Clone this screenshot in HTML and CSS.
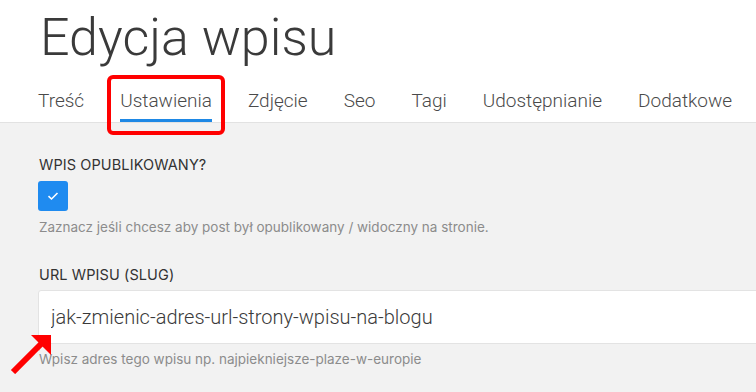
FILE: index.html
```html
<!DOCTYPE html>
<html lang="pl">
<head>
  <meta charset="UTF-8" />
  <title>Edycja wpisu</title>
  <link rel="stylesheet" href="styles.css">
</head>
<body>
  <header class="page-head">
    <h1>Edycja wpisu</h1>
    <nav class="tabs">
      <a class="tab">Treść</a>
      <a class="tab is-active">Ustawienia<span class="mark-box"></span></a>
      <a class="tab">Zdjęcie</a>
      <a class="tab">Seo</a>
      <a class="tab">Tagi</a>
      <a class="tab">Udostępnianie</a>
      <a class="tab">Dodatkowe</a>
    </nav>
  </header>

  <main class="settings">
    <!-- Publikacja -->
    <div class="field">
      <label class="field-label">Wpis opublikowany?</label>
      <span class="check">
        <svg viewBox="0 0 12 10" aria-hidden="true"><path d="M1.5 5.2 4.5 8 10.5 2" /></svg>
      </span>
      <p class="field-help">Zaznacz jeśli chcesz aby post był opublikowany / widoczny na stronie.</p>
    </div>

    <!-- Slug -->
    <div class="field field-slug">
      <label class="field-label">URL wpisu (slug)</label>
      <input class="text-input" type="text" value="jak-zmienic-adres-url-strony-wpisu-na-blogu" />
      <p class="field-help">Wpisz adres tego wpisu np. najpiekniejsze-plaze-w-europie</p>
      <svg class="mark-arrow" viewBox="0 0 44 42" aria-hidden="true">
        <path d="M3 40 32 11" />
        <polygon points="21,3 41,3 41,23" />
      </svg>
    </div>
  </main>
</body>
</html>
```

FILE: styles.css
```css
*, *::before, *::after {
  box-sizing: border-box;
}

body {
  margin: 0;
  font-family: 'Inter', 'Liberation Sans', sans-serif;
  background: #f2f2f2;
  color: #333;
  overflow: hidden;
}

/* Nagłówek */
.page-head {
  background: #fff;
  padding: 12px 40px 0;
  border-bottom: 1px solid #e2e2e2;
}

h1 {
  margin: 0;
  font-family: 'Roboto', sans-serif;
  font-size: 52px;
  font-weight: 300;
  line-height: 52px;
  color: #3a3a3a;
}

.tabs {
  display: flex;
  gap: 36px;
  margin-top: 25px;
  margin-left: -2px;
}

.tab {
  position: relative;
  font-family: 'Roboto', sans-serif;
  font-size: 19px;
  font-weight: 300;
  color: #4a4a4a;
  padding-bottom: 7px;
  border-bottom: 3px solid transparent;
  white-space: nowrap;
}

.tab.is-active {
  border-bottom-color: #1e88e5;
}

/* Adnotacja */
.mark-box {
  position: absolute;
  left: -13px;
  right: -13px;
  top: -14px;
  bottom: -16px;
  border: 4px solid #f00;
  border-radius: 6px;
}

/* Formularz */
.settings {
  padding: 33px 0 0 39px;
}

.field {
  margin-bottom: 30px;
}

.field-label {
  display: block;
  font-size: 14.5px;
  text-transform: uppercase;
  color: #333;
  letter-spacing: 0.1px;
  line-height: 18px;
}

.check {
  display: flex;
  align-items: center;
  justify-content: center;
  width: 30px;
  height: 30px;
  margin: 7px 0 0 -1px;
  background: #1f8bf0;
  border-radius: 3px;
}

.check svg {
  width: 12px;
  height: 10px;
  fill: none;
  stroke: #fff;
  stroke-width: 1.6;
}

.field-help {
  margin: 7px 0 0;
  font-size: 13.5px;
  color: #8c8c8c;
  line-height: 18px;
}

.field-slug {
  position: relative;
}

.text-input {
  display: block;
  width: 760px;
  height: 54px;
  margin: 6px 0 0 -1px;
  padding: 0 12px;
  border: 1px solid #e3e3e3;
  border-radius: 3px;
  background: #fff;
  font-family: 'Roboto', sans-serif;
  font-size: 20px;
  font-weight: 300;
  color: #3a3a3a;
}

.field-slug .field-help {
  margin-top: 6px;
}

.mark-arrow {
  position: absolute;
  left: -29px;
  top: 66px;
  width: 44px;
  height: 42px;
}

.mark-arrow path {
  stroke: #f00;
  stroke-width: 6;
}

.mark-arrow polygon {
  fill: #f00;
}
```
